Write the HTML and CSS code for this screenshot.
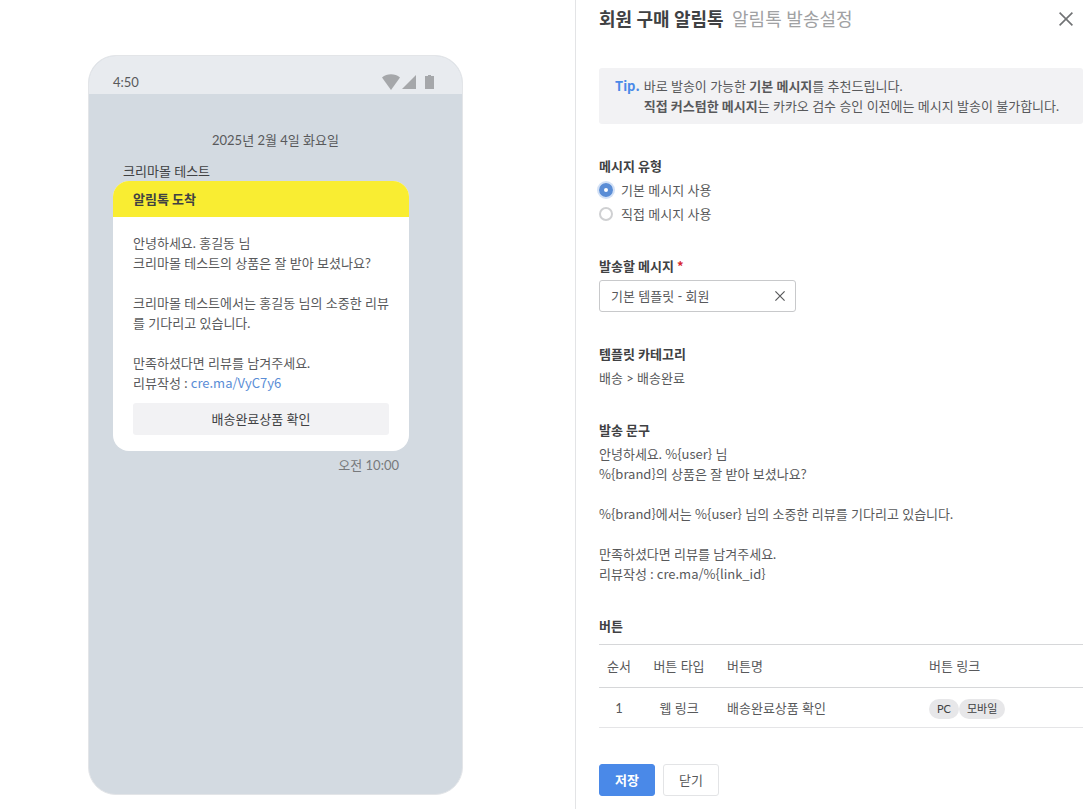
FILE: index.html
```html
<!DOCTYPE html>
<html lang="ko">
<head>
  <meta charset="UTF-8">
  <meta name="viewport" content="width=device-width, initial-scale=1.0">
  <title>알림톡 발송설정</title>
  <link rel="stylesheet" href="styles.css">
</head>
<body>
  <div class="layout">

    <!-- Phone preview -->
    <main class="preview">
      <div class="phone">
        <div class="status-bar">
          <span>4:50</span>
          <svg class="status-icons" width="54" height="20" viewBox="0 -1 54 20" fill="#a5a7aa" aria-hidden="true">
            <path d="M1 4.6C6 .2 14 .2 19 4.6L10 17Z"/>
            <path d="M21 16 35 2V16Z"/>
            <path d="M44 3h3V2h3v1h3v13h-9Z"/>
          </svg>
        </div>
        <div class="chat">
          <p class="date">2025년 2월 4일 화요일</p>
          <p class="sender">크리마몰 테스트</p>
          <div class="bubble">
            <h2>알림톡 도착</h2>
            <div class="bubble-body">
              <p>안녕하세요. 홍길동 님<br>크리마몰 테스트의 상품은 잘 받아 보셨나요?<br><br>크리마몰 테스트에서는 홍길동 님의 소중한 리뷰를 기다리고 있습니다.<br><br>만족하셨다면 리뷰를 남겨주세요.<br>리뷰작성 : <a href="#">cre.ma/VyC7y6</a></p>
              <button type="button">배송완료상품 확인</button>
            </div>
          </div>
          <p class="time">오전 10:00</p>
        </div>
      </div>
    </main>

    <!-- Settings -->
    <form class="settings">
      <header class="title">
        <h1>회원 구매 알림톡 <span>알림톡 발송설정</span></h1>
        <button type="button" class="icon-btn" aria-label="닫기">
          <svg width="14" height="14" viewBox="0 0 14 14" fill="none" stroke="#707274" stroke-width="1.6"><path d="M.6.6 13.4 13.4M13.4.6.6 13.4"/></svg>
        </button>
      </header>

      <div class="tip">
        <strong class="tip-label">Tip.</strong>
        <p>바로 발송이 가능한 <b>기본 메시지</b>를 추천드립니다.<br><b>직접 커스텀한 메시지</b>는 카카오 검수 승인 이전에는 메시지 발송이 불가합니다.</p>
      </div>

      <fieldset class="section">
        <legend>메시지 유형</legend>
        <label class="radio"><input type="radio" name="type" checked>기본 메시지 사용</label>
        <label class="radio"><input type="radio" name="type">직접 메시지 사용</label>
      </fieldset>

      <div class="section">
        <label class="label" for="template">발송할 메시지 <span class="required">*</span></label>
        <div class="select">
          <select id="template">
            <option>기본 템플릿 - 회원</option>
          </select>
          <button type="button" class="icon-btn clear" aria-label="선택 해제">
            <svg width="10" height="10" viewBox="0 0 10 10" fill="none" stroke="#58595b" stroke-width="1.2"><path d="M.4.4 9.6 9.6M9.6.4.4 9.6"/></svg>
          </button>
        </div>
      </div>

      <div class="section">
        <h3 class="label">템플릿 카테고리</h3>
        <p>배송 &gt; 배송완료</p>
      </div>

      <div class="section">
        <h3 class="label">발송 문구</h3>
        <p>안녕하세요. <var>%{user}</var> 님<br><var>%{brand}</var>의 상품은 잘 받아 보셨나요?<br><br><var>%{brand}</var>에서는 <var>%{user}</var> 님의 소중한 리뷰를 기다리고 있습니다.<br><br>만족하셨다면 리뷰를 남겨주세요.<br>리뷰작성 : <var>cre.ma/%{link_id}</var></p>
      </div>

      <div class="section">
        <h3 class="label">버튼</h3>
        <table>
          <thead>
            <tr>
              <th class="col-order">순서</th>
              <th class="col-type">버튼 타입</th>
              <th class="col-name">버튼명</th>
              <th>버튼 링크</th>
            </tr>
          </thead>
          <tbody>
            <tr>
              <td class="col-order">1</td>
              <td class="col-type">웹 링크</td>
              <td>배송완료상품 확인</td>
              <td><div class="tags"><span>PC</span><span>모바일</span></div></td>
            </tr>
          </tbody>
        </table>
      </div>

      <div class="actions">
        <button type="submit" class="btn primary">저장</button>
        <button type="button" class="btn">닫기</button>
      </div>
    </form>

  </div>
</body>
</html>
```
FILE: styles.css
```css
* {
  margin: 0;
  padding: 0;
  box-sizing: border-box;
}
body {
  background: #fff;
  color: #58595b;
  font-family: Lato, 'Noto Sans CJK KR', sans-serif;
  font-size: 13px;
  line-height: 20px;
}
button, select {
  font: inherit;
  color: inherit;
}
button {
  border: none;
  background: none;
  cursor: pointer;
}
a, var, .tip-label, .required {
  font-family: 'Noto Sans CJK KR', sans-serif;
  font-style: normal;
  line-height: 1;
}
.layout {
  display: grid;
  grid-template-columns: 575fr 514fr;
  min-height: 100vh;
}

/* preview */
.preview {
  padding: 55px 24px 14px 0;
}
.phone {
  width: 375px;
  min-height: 740px;
  margin: 0 auto;
  background: #d3dae1;
  border: 1px solid #e3e5e8;
  border-radius: 28px;
  overflow: hidden;
}
.status-bar {
  display: flex;
  justify-content: space-between;
  padding: 16px 27px 2px 24px;
  background: #e8ebef;
}
.chat {
  padding: 36px 24px;
}
.date {
  text-align: center;
}
.sender {
  margin: 11px 10px 0;
  color: #404143;
}
.bubble {
  width: 296px;
  background: #fff;
  border-radius: 16px;
  overflow: hidden;
}
.bubble h2 {
  padding: 8px 20px;
  background: #f9ed32;
  color: #404143;
  font-size: 13px;
}
.bubble-body {
  padding: 16px 20px;
}
.bubble-body a {
  color: #5a8dd6;
  text-decoration: none;
}
.bubble-body button {
  width: 100%;
  height: 32px;
  margin-top: 10px;
  background: #f2f2f4;
  border-radius: 3px;
  color: #404143;
}
.time {
  width: 286px;
  margin-top: 4px;
  text-align: right;
  color: #77797c;
}

/* settings */
.settings {
  padding: 5px 6px 12px 23px;
  border-left: 1px solid #e3e4e6;
}
.title {
  display: flex;
  justify-content: space-between;
  align-items: center;
  padding-right: 10px;
  margin-bottom: 35px;
}
.title h1 {
  font-size: 18px;
  line-height: 28px;
  color: #404143;
}
.title h1 span {
  margin-left: 4px;
  font-weight: 400;
  color: #a0a1a3;
}
.icon-btn {
  display: flex;
}
.tip {
  display: flex;
  gap: 4px;
  padding: 8px 16px;
  background: #f2f2f4;
  border-radius: 3px;
}
.tip-label {
  color: #4a89e8;
  line-height: 20px;
}
.section {
  margin-top: 32px;
  border: none;
}
.label, legend {
  display: block;
  margin-bottom: 4px;
  color: #404143;
  font-size: 13px;
  font-weight: 700;
}
.required {
  color: #d7282f;
}
.radio {
  display: flex;
  align-items: center;
  gap: 8px;
}
.radio + .radio {
  margin-top: 4px;
}
.radio input {
  appearance: none;
  width: 14px;
  height: 14px;
  border: 2px solid #cfd0d2;
  border-radius: 50%;
}
.radio input:checked {
  border: 5px solid #5a8dd6;
  box-shadow: 0 0 0 2px #d3e1f6;
}
.select {
  position: relative;
  width: 197px;
}
.select select {
  display: block;
  appearance: none;
  width: 100%;
  height: 32px;
  padding: 0 32px 0 11px;
  background: #fff;
  border: 1px solid #c8c9cb;
  border-radius: 3px;
}
.clear {
  position: absolute;
  top: 11px;
  right: 11px;
}
table {
  width: 100%;
  margin-top: 8px;
  table-layout: fixed;
  border-collapse: collapse;
  border-top: 1px solid #d6d7d9;
}
th, td {
  padding: 0 8px;
  text-align: left;
  font-weight: 400;
}
th {
  height: 43px;
  border-bottom: 1px solid #d6d7d9;
}
td {
  height: 40px;
  border-bottom: 1px solid #e5e5e7;
}
.col-order {
  width: 40px;
  padding: 0;
  text-align: center;
}
.col-type {
  width: 80px;
  padding: 0;
  text-align: center;
}
.col-name {
  width: 202px;
}
.tags {
  display: flex;
  padding-top: 2px;
}
.tags span {
  padding: 0 8px;
  background: #e7e7e9;
  border-radius: 10px;
  color: #404143;
  font-size: 11px;
}
.actions {
  display: flex;
  gap: 8px;
  margin-top: 36px;
}
.btn {
  width: 56px;
  height: 32px;
  background: #fff;
  border: 1px solid #e3e4e6;
  border-radius: 3px;
}
.btn.primary {
  background: #4a89e8;
  border-color: #4a89e8;
  color: #fff;
  font-weight: 700;
}
```
